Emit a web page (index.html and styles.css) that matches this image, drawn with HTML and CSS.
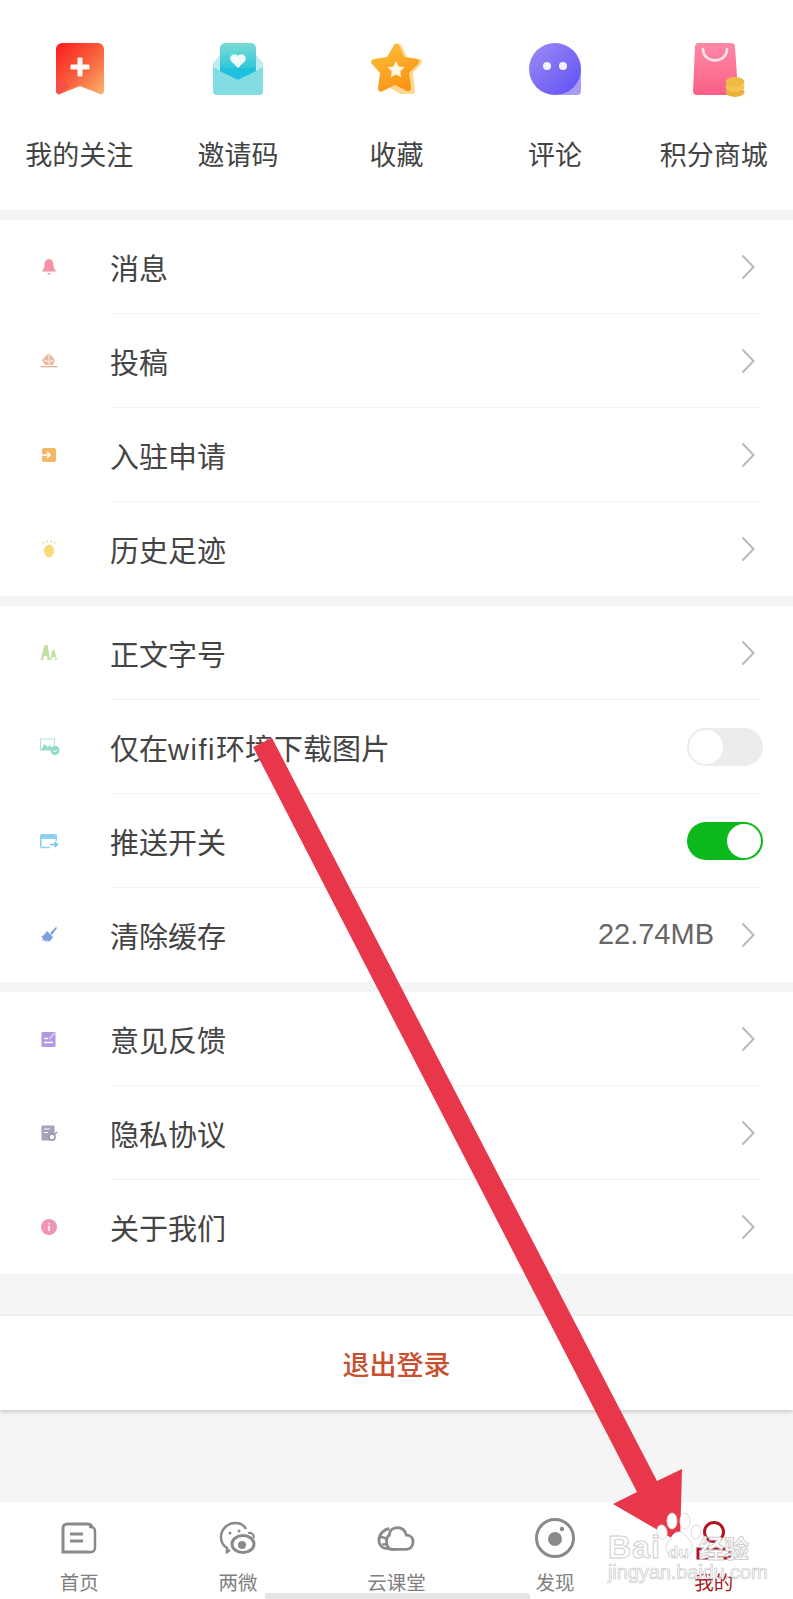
FILE: index.html
```html
<!DOCTYPE html>
<html lang="zh">
<head>
<meta charset="utf-8">
<title>我的</title>
<link rel="stylesheet" href="styles.css">
</head>
<body>
<div class="page">
  <section class="shortcuts">
    <div class="shortcut">
      <svg class="big-icon" viewBox="0 0 52 52"><defs><linearGradient id="g1" x1="0" y1="0" x2="1" y2="1"><stop offset="0" stop-color="#fb1a1e"/><stop offset=".55" stop-color="#f9643f"/><stop offset="1" stop-color="#fcb56c"/></linearGradient></defs><path d="M3 6a6 6 0 0 1 6-6h36a6 6 0 0 1 6 6v42a3 3 0 0 1-4 3L27 43 7 51a3 3 0 0 1-4-3z" fill="url(#g1)"/><path d="M3 33l14 10-10 8a3 3 0 0 1-4-3z" fill="#f6484f" opacity=".7"/><path d="M25 15h4v7h7v4h-7v7h-4v-7h-7v-4h7z" fill="#fff8f4" stroke="#fff8f4" stroke-linejoin="round"/></svg>
      <span class="shortcut-label">我的关注</span>
    </div>
    <div class="shortcut">
      <svg class="big-icon" viewBox="0 0 52 52"><defs><linearGradient id="g2" x1="0" y1="0" x2="0" y2="1"><stop offset="0" stop-color="#7adbd2"/><stop offset="1" stop-color="#1fc1de"/></linearGradient></defs><path d="M1 20l6-7h38l6 7v28a4 4 0 0 1-4 4H5a4 4 0 0 1-4-4z" fill="#bfebf0"/><path d="M8 5a5 5 0 0 1 5-5h26a5 5 0 0 1 5 5v27H8z" fill="url(#g2)"/><path d="M1 24l25 13 25-13v24a4 4 0 0 1-4 4H5a4 4 0 0 1-4-4z" fill="#84dce3"/><path d="M8 28l18 9 18-9v-3H8z" fill="#1fc1de"/><path d="M26 25l-7-7a4.200 4.200 0 0 1 7-5 4.200 4.200 0 0 1 7 5z" fill="#eefbf9"/></svg>
      <span class="shortcut-label">邀请码</span>
    </div>
    <div class="shortcut">
      <svg class="big-icon" viewBox="0 0 52 52"><defs><linearGradient id="g3" x1="0" y1="0" x2=".5" y2="1"><stop offset="0" stop-color="#fbc23c"/><stop offset="1" stop-color="#fb9316"/></linearGradient></defs><path d="M27 2c2-2 4-1 5 1l5 11 12 2c3 0 4 3 2 5l-8 9 2 18c0 2-1 3-3 3H31L20 45z" fill="#fbd78f"/><path d="M24 2c1-2 4-2 5 0l5 12 13 2c2 1 3 3 1 5l-9 9 2 14c1 3-2 5-4 4l-12-6-12 6c-3 2-5 0-5-3l2-15-8-9c-2-2-1-4 2-5l13-2z" fill="url(#g3)"/><path d="M26 18l2.600 5.500 5.900.8-4.300 4.100 1 5.900-5.200-2.800-5.200 2.800 1-5.900-4.300-4.100 5.900-.8z" fill="#fff6e4"/></svg>
      <span class="shortcut-label">收藏</span>
    </div>
    <div class="shortcut">
      <svg class="big-icon" viewBox="0 0 52 52"><defs><linearGradient id="g4" x1="0" y1="0" x2="1" y2="1"><stop offset="0" stop-color="#9c8cf6"/><stop offset="1" stop-color="#5f4ff4"/></linearGradient></defs><path d="M30 52h18a4 4 0 0 0 4-4V26z" fill="#a99cf7"/><circle cx="26" cy="26" r="26" fill="url(#g4)"/><circle cx="18" cy="23" r="4" fill="#f4f2ff"/><circle cx="34" cy="23" r="4" fill="#f4f2ff"/></svg>
      <span class="shortcut-label">评论</span>
    </div>
    <div class="shortcut">
      <svg class="big-icon" viewBox="0 0 52 52"><defs><linearGradient id="g5" x1="0" y1="0" x2="0" y2="1"><stop offset="0" stop-color="#fc89a5"/><stop offset="1" stop-color="#fb5f87"/></linearGradient></defs><path d="M7 4a4 4 0 0 1 4-4h32a4 4 0 0 1 4 4l3 44a4 4 0 0 1-4 4H9a4 4 0 0 1-4-4z" fill="url(#g5)"/><path d="M15 6c0 15 24 15 24 0" fill="none" stroke="#fde4ea" stroke-width="2.600" stroke-linecap="round"/><ellipse cx="47" cy="49" rx="9.500" ry="5" fill="#e9b03a"/><ellipse cx="47" cy="44" rx="9.500" ry="5" fill="#f3c455"/><ellipse cx="47" cy="39" rx="9.500" ry="5" fill="#f0bb45"/></svg>
      <span class="shortcut-label">积分商城</span>
    </div>
  </section>

  <section class="group">
    <div class="row">
      <span class="row-icon"><svg viewBox="0 0 18 18"><path d="M9 1c3 0 4.500 3 4.500 6 0 3 1 4.500 3 6.500H1.500c2-2 3-3.500 3-6.500C4.500 4 6 1 9 1z" fill="#f3899c"/><path d="M7 15h4l-2 2z" fill="#f3899c"/></svg></span>
      <div class="row-body"><span class="row-label">消息</span><svg class="chevron" viewBox="0 0 14 26"><path d="M1.500 1.500L12.500 13 1.500 24.500"/></svg></div>
    </div>
    <div class="row">
      <span class="row-icon"><svg viewBox="0 0 18 18"><path d="M9 1l6 7-2 5H5L2 8z" fill="#e9b195"/><path d="M9 1v12M4 8l5 2 5-2" stroke="#fff" stroke-width=".8" fill="none"/><path d="M0.500 14h17v1.300H.5z" fill="#e4a88c"/></svg></span>
      <div class="row-body"><span class="row-label">投稿</span><svg class="chevron" viewBox="0 0 14 26"><path d="M1.500 1.500L12.500 13 1.500 24.500"/></svg></div>
    </div>
    <div class="row">
      <span class="row-icon"><svg viewBox="0 0 18 18"><rect x="2" y="2" width="14" height="14" rx="2" fill="#f5b155"/><path d="M2 9h7M7 6l3 3-3 3" stroke="#fff" stroke-width="1.600" fill="none"/></svg></span>
      <div class="row-body"><span class="row-label">入驻申请</span><svg class="chevron" viewBox="0 0 14 26"><path d="M1.500 1.500L12.500 13 1.500 24.500"/></svg></div>
    </div>
    <div class="row row-last">
      <span class="row-icon"><svg viewBox="0 0 18 18"><ellipse cx="9" cy="11" rx="5" ry="6.500" fill="#fbd568"/><circle cx="3.500" cy="2.500" r="1" fill="#dcd79a"/><circle cx="7" cy="1.500" r="1" fill="#dcd79a"/><circle cx="11" cy="1.500" r="1" fill="#dcd79a"/><circle cx="14.500" cy="2.500" r="1" fill="#dcd79a"/></svg></span>
      <div class="row-body"><span class="row-label">历史足迹</span><svg class="chevron" viewBox="0 0 14 26"><path d="M1.500 1.500L12.500 13 1.500 24.500"/></svg></div>
    </div>
  </section>

  <section class="group">
    <div class="row">
      <span class="row-icon"><svg viewBox="0 0 18 18"><path d="M0.500 16L4.500 1h3l2.500 15H7.500L7 12H4l-1 4z" fill="#bcdd96"/><path d="M10 16l2.500-10h2l2.500 10h-1.600l-.5-3h-2.600l-.7 3z" fill="#bcdd96"/></svg></span>
      <div class="row-body"><span class="row-label">正文字号</span><svg class="chevron" viewBox="0 0 14 26"><path d="M1.500 1.500L12.500 13 1.500 24.500"/></svg></div>
    </div>
    <div class="row">
      <span class="row-icon"><svg viewBox="0 0 18 18"><rect x=".5" y="1" width="14" height="11" fill="none" stroke="#a5e2d3"/><path d="M1 12l3.500-6 3 3 2-2 4 5z" fill="#88d9c2"/><circle cx="15" cy="12.500" r="4.500" fill="#82d8c4"/><path d="M13 12l2 2 2-2" stroke="#fff" fill="none"/></svg></span>
      <div class="row-body"><span class="row-label">仅在<span class="latin">wifi</span>环境下载图片</span><span class="toggle"><span class="knob"></span></span></div>
    </div>
    <div class="row">
      <span class="row-icon"><svg viewBox="0 0 18 18"><path d="M0 4a2 2 0 0 1 2-2h13a2 2 0 0 1 2 2v3H0z" fill="#80cdf2"/><path d="M.8 6v8a1.500 1.500 0 0 0 1.500 1.500H10M16.200 6v3" fill="none" stroke="#80cdf2" stroke-width="1.600"/><path d="M10 12.500h7M14.500 10l3 2.500-3 2.500" stroke="#63bdea" stroke-width="1.600" fill="none"/></svg></span>
      <div class="row-body"><span class="row-label">推送开关</span><span class="toggle toggle-on"><span class="knob"></span></span></div>
    </div>
    <div class="row row-last">
      <span class="row-icon"><svg viewBox="0 0 18 18"><path d="M10 7l6-6 1 1-5 7z" fill="#6f95dd"/><path d="M7 5l6 6-2 3-3 2-1-2-1 2-2-2-2 1 1-3-2-1 3-2z" fill="#6f95dd"/></svg></span>
      <div class="row-body"><span class="row-label">清除缓存</span><span class="row-value">22.74MB</span><svg class="chevron" viewBox="0 0 14 26"><path d="M1.500 1.500L12.500 13 1.500 24.500"/></svg></div>
    </div>
  </section>

  <section class="group">
    <div class="row">
      <span class="row-icon"><svg viewBox="0 0 18 18"><rect x="1.500" y="2" width="14" height="15" rx="1" fill="#a78fdf"/><path d="M4 12.500h9M4 8.500h4" stroke="#fff" stroke-width="1.400"/><path d="M9 9l7-7" stroke="#d7caf2" stroke-width="1.600"/></svg></span>
      <div class="row-body"><span class="row-label">意见反馈</span><svg class="chevron" viewBox="0 0 14 26"><path d="M1.500 1.500L12.500 13 1.500 24.500"/></svg></div>
    </div>
    <div class="row">
      <span class="row-icon"><svg viewBox="0 0 18 18"><rect x="1.500" y="1.500" width="13" height="15" rx="1" fill="#9d99b8"/><path d="M4 5h6M4 8.500h4" stroke="#fff" stroke-width="1.200"/><circle cx="12" cy="13" r="3" fill="#fff" stroke="#8e8a9e" stroke-width="1.500"/><path d="M14 11l3-3" stroke="#8e8a9e" stroke-width="1.500"/></svg></span>
      <div class="row-body"><span class="row-label">隐私协议</span><svg class="chevron" viewBox="0 0 14 26"><path d="M1.500 1.500L12.500 13 1.500 24.500"/></svg></div>
    </div>
    <div class="row row-last">
      <span class="row-icon"><svg viewBox="0 0 18 18"><circle cx="9" cy="9" r="8" fill="#ee8ca8"/><path d="M9 5v1.500M9 8v5" stroke="#fff" stroke-width="1.500"/></svg></span>
      <div class="row-body"><span class="row-label">关于我们</span><svg class="chevron" viewBox="0 0 14 26"><path d="M1.500 1.500L12.500 13 1.500 24.500"/></svg></div>
    </div>
  </section>

  <div class="logout">退出登录</div>

  <nav class="tabbar">
    <div class="tab">
      <svg class="tab-icon" viewBox="0 0 36 32"><path d="M23 2H6a4 4 0 0 0-4 4v24h25a4 4 0 0 0 4-4V6a4 4 0 0 0-4-4z" fill="none" stroke="#8a8a8a" stroke-width="3"/><path d="M9 12h13M9 19h13" stroke="#8a8a8a" stroke-width="3"/><path d="M28 5h2a4 4 0 0 1 4 4v17a4 4 0 0 1-4 4h-3" fill="#fff" stroke="#8a8a8a" stroke-width="2.500"/></svg>
      <span class="tab-label">首页</span>
    </div>
    <div class="tab">
      <svg class="tab-icon" viewBox="0 0 36 32"><path d="M10 28l-3 2 0-4C2 23 1 19 1 15 1 7 8 1 15 1c5 0 9 2 11 6" fill="none" stroke="#8a8a8a" stroke-width="2.500"/><circle cx="10" cy="11" r="1.500" fill="#8a8a8a"/><circle cx="19" cy="9" r="1.500" fill="#8a8a8a"/><ellipse cx="23" cy="22" rx="11" ry="8.500" fill="#fff" stroke="#8a8a8a" stroke-width="3"/><circle cx="22" cy="23" r="4" fill="#8a8a8a"/><path d="M28 11c3-1 6 1 6 5" fill="none" stroke="#8a8a8a" stroke-width="2"/></svg>
      <span class="tab-label">两微</span>
    </div>
    <div class="tab">
      <svg class="tab-icon" viewBox="0 0 38 32"><path d="M12 6C6 7 1 12 1 18c0 5 3 9 8 9l9 1" fill="none" stroke="#8a8a8a" stroke-width="3"/><path d="M2 15c5 0 9 2 12 7M4 23c4-1 8 0 11 4" fill="none" stroke="#8a8a8a" stroke-width="2.500"/><path d="M15 28h15c4 0 7-3 7-8 0-4-3-7-7-7-1-5-5-8-9-8-5 0-9 3-9 8-2 1-3 3-3 6 0 5 2 9 6 9z" fill="#fff" stroke="#8a8a8a" stroke-width="3"/></svg>
      <span class="tab-label">云课堂</span>
    </div>
    <div class="tab">
      <svg class="tab-icon tab-icon-round" viewBox="0 0 40 40"><circle cx="20" cy="20" r="18.500" fill="none" stroke="#8a8a8a" stroke-width="3"/><circle cx="20" cy="21" r="7" fill="#8a8a8a"/><circle cx="27" cy="11" r="2.200" fill="#8a8a8a"/></svg>
      <span class="tab-label">发现</span>
    </div>
    <div class="tab tab-active">
      <svg class="tab-icon" viewBox="0 0 36 32"><circle cx="18" cy="10" r="9.500" fill="none" stroke="#b0141f" stroke-width="3"/><path d="M2 36v-9h32v9z" fill="none" stroke="#b0141f" stroke-width="3"/></svg>
      <span class="tab-label">我的</span>
    </div>
  </nav>
  <div class="home-bar"></div>

  <svg class="arrow" viewBox="0 0 793 1599"><path d="M253 747L272 738 657 1481 682 1469 680 1543 613 1504 637 1492z" fill="#e8364a"/></svg>

  <div class="watermark">
    <svg class="paw" viewBox="0 0 46 46"><ellipse cx="6" cy="20" rx="5" ry="7" fill="#fff" stroke="#ddd" transform="rotate(-12 6 20)"/><ellipse cx="16" cy="9" rx="5" ry="8" fill="#fff" stroke="#ddd"/><ellipse cx="29" cy="9" rx="5" ry="8" fill="#fff" stroke="#ddd"/><ellipse cx="40" cy="20" rx="5" ry="7" fill="#fff" stroke="#ddd" transform="rotate(12 40 20)"/><path d="M23 20c5 0 7 4 11 9 4 5 2 15-5 15-3 0-4-2-6-2s-4 2-8 1c-5-1-7-8-3-13 4-5 5-10 11-10z" fill="#fff" stroke="#ddd"/></svg>
    <div class="wm-line"><span class="wm-bai">Bai</span><span class="wm-du">du</span><span class="wm-cn">经验</span></div>
    <div class="wm-url">jingyan.baidu.com</div>
  </div>
</div>
</body>
</html>
```
FILE: styles.css
```css
* { box-sizing: border-box; }
html, body { margin: 0; padding: 0; }
body {
  width: 793px;
  height: 1599px;
  overflow: hidden;
  background: #f5f5f5;
  font-family: "Liberation Sans", "Noto Sans CJK SC", sans-serif;
  color: #444;
}
.page { position: relative; width: 793px; height: 1599px; display: flex; flex-direction: column; overflow: hidden; }

.shortcuts { display: grid; grid-template-columns: repeat(5, 1fr); height: 210px; padding-top: 43px; background: #fff; }
.shortcut { display: flex; flex-direction: column; align-items: center; }
.big-icon { width: 52px; height: 52px; overflow: visible; }
.shortcut-label { margin-top: 41px; font-size: 27px; line-height: 40px; white-space: nowrap; }

.group { margin-top: 10px; background: #fff; }
.row { display: flex; height: 94px; align-items: stretch; }
.row-icon { width: 110px; flex: none; display: flex; align-items: center; justify-content: flex-start; padding-left: 40px; }
.row-icon svg { width: 18px; height: 18px; overflow: visible; opacity: .9; }
.row-body { flex: 1; margin-right: 30px; display: flex; align-items: center; border-bottom: 1px solid #f4f4f4; }
.row-last .row-body { border-bottom-color: transparent; }
.row-label { font-size: 29px; flex: 1; white-space: nowrap; }
.latin { font-family: "Liberation Sans", sans-serif; letter-spacing: 1.500px; }
.row-value { font-size: 29px; color: #666; margin-right: 27px; }
.chevron { width: 14px; height: 26px; margin-right: 8px; flex: none; fill: none; stroke: #b9b9b9; stroke-width: 2; }

.toggle { width: 76px; height: 38px; border-radius: 19px; background: #ececec; padding: 2px; flex: none; display: flex; justify-content: flex-start; }
.toggle-on { background: #0cb91c; justify-content: flex-end; }
.knob { width: 34px; height: 34px; border-radius: 50%; background: #fff; }

.logout { margin-top: 41px; height: 95px; background: #fff; color: #c8502f; font-size: 27px; font-weight: 500; display: flex; align-items: center; justify-content: center; border-top: 1px solid #f0f0f0; box-shadow: 0 2px 4px rgba(0,0,0,.18); }

.tabbar { margin-top: 92px; height: 97px; background: #fff; display: grid; grid-template-columns: repeat(5, 1fr); padding-top: 20px; flex: none; }
.tab { display: flex; flex-direction: column; align-items: center; }
.tab-icon { width: 36px; height: 32px; overflow: visible; }
.tab-icon-round { width: 40px; height: 40px; margin-top: -4px; margin-bottom: -4px; }
.tab-label { margin-top: 15px; font-size: 19.500px; line-height: 28px; color: #808080; }
.tab-active .tab-label { color: #a11b25; }

.home-bar { position: absolute; left: 265px; bottom: 0; width: 265px; height: 6px; background: #e4e4e4; border-radius: 3px 3px 0 0; }
.arrow { position: absolute; left: 0; top: 0; width: 793px; height: 1599px; pointer-events: none; }

.watermark { position: absolute; left: 606px; top: 1512px; width: 150px; height: 68px; }
.paw { position: absolute; left: 50px; top: 0; width: 46px; height: 46px; overflow: visible; }
.wm-line { position: absolute; left: 2px; top: 18px; display: flex; align-items: baseline; white-space: nowrap; color: #fff; -webkit-text-stroke: 1px #cfcfcf; line-height: 34px; }
.wm-bai { font-size: 32px; font-weight: 700; width: 60px; letter-spacing: 1px; }
.wm-du { font-size: 17px; font-weight: 700; width: 31px; color: #fff; -webkit-text-stroke: .6px #bdbdbd; }
.wm-cn { font-size: 25px; font-weight: 700; white-space: nowrap; }
.wm-url { position: absolute; left: 2px; top: 49px; font-size: 20px; letter-spacing: -.1px; color: #fff; -webkit-text-stroke: .7px #c9c9c9; white-space: nowrap; }
```
